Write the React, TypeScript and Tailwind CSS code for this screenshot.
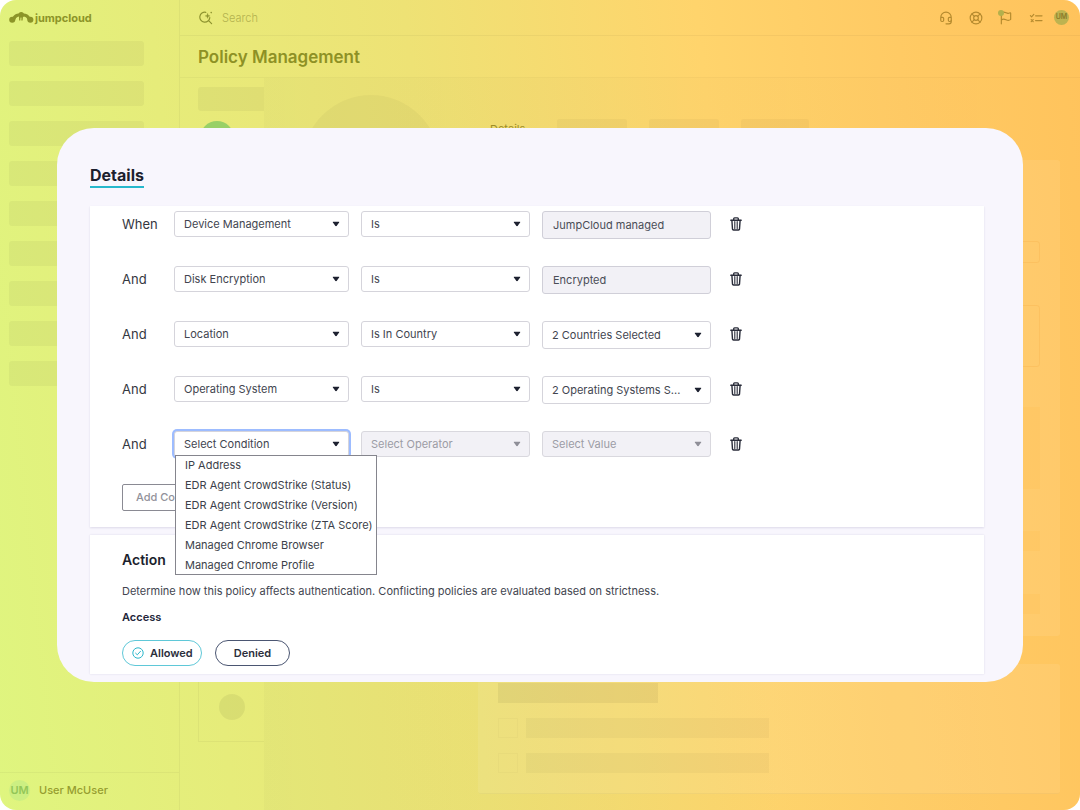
import React from "react";
import { Headset, LifeBuoy, Flag } from "lucide-react";

type Operator = { text: string; disabled?: boolean };
type Value = { kind: "input" | "select"; text: string; disabled?: boolean };
type Condition = {
  join: string;
  subject: string;
  operator: Operator;
  value: Value;
  open?: boolean;
};

const conditions: Condition[] = [
  { join: "When", subject: "Device Management", operator: { text: "Is" }, value: { kind: "input", text: "JumpCloud managed" } },
  { join: "And", subject: "Disk Encryption", operator: { text: "Is" }, value: { kind: "input", text: "Encrypted" } },
  { join: "And", subject: "Location", operator: { text: "Is In Country" }, value: { kind: "select", text: "2 Countries Selected" } },
  { join: "And", subject: "Operating System", operator: { text: "Is" }, value: { kind: "select", text: "2 Operating Systems S..." } },
  {
    join: "And",
    subject: "Select Condition",
    operator: { text: "Select Operator", disabled: true },
    value: { kind: "select", text: "Select Value", disabled: true },
    open: true,
  },
];

const menuItems = [
  "IP Address",
  "EDR Agent CrowdStrike (Status)",
  "EDR Agent CrowdStrike (Version)",
  "EDR Agent CrowdStrike (ZTA Score)",
  "Managed Chrome Browser",
  "Managed Chrome Profile",
];

function Logo() {
  return (
    <svg viewBox="0 0 26 14" className="h-[14px] w-[26px]" fill="currentColor" aria-hidden="true">
      <circle cx="3.200" cy="8.800" r="3" />
      <circle cx="21.400" cy="8.800" r="3" />
      <circle cx="12.200" cy="3.600" r="2.700" />
      <path d="M3 7C5 3.600 7.600 2.400 10.400 2.600H14C17 2.400 19.800 3.800 21.600 7L19 10.400C18.600 7.600 17.200 6 14.800 5.600L13.900 6.200L13.600 9.600H12.300L12.500 6.600H11.500L11.300 9.600H10.100L10 5.600C7.600 6 6.400 7.600 5.800 10.400Z" />
    </svg>
  );
}

function SearchIcon() {
  return (
    <svg viewBox="0 0 14 14" className="h-[14px] w-[14px]" fill="none" stroke="currentColor" strokeWidth="1.200" strokeLinecap="round" aria-hidden="true">
      <path d="M6.800 1.300A5 5 0 1 0 10.800 6.600M9.600 9.600L12.600 12.600" />
      <path d="M8.600 2.400L9.300 4.200L11.100 4.900L9.300 5.600L8.600 7.400L7.900 5.600L6.100 4.900L7.900 4.200Z" fill="currentColor" strokeWidth=".3" />
      <circle cx="12.200" cy="1.600" r=".8" fill="currentColor" stroke="none" />
    </svg>
  );
}

function TasksIcon() {
  return (
    <svg viewBox="0 0 14 14" className="h-[14px] w-[14px]" fill="none" stroke="currentColor" strokeWidth="1.200" strokeLinecap="round" strokeLinejoin="round" aria-hidden="true">
      <path d="M1.400 4.600L2.600 5.800L4.800 3.400M6.600 4.800H13M6.600 9.600H13" />
      <path d="M2.200 8.600L4.200 10.600M4.200 8.600L2.200 10.600" />
    </svg>
  );
}

function TrashIcon() {
  return (
    <svg viewBox="0 0 12 14" className="h-[14px] w-[12px]" fill="none" stroke="currentColor" strokeWidth="1.400" strokeLinecap="round" strokeLinejoin="round" aria-hidden="true">
      <path d="M.8 3.200H11.200M3.700 3V1.700Q3.700.9 4.500.9H7.500Q8.300.9 8.300 1.700V3" />
      <path d="M1.900 3.400L2.500 12.200Q2.600 13 3.400 13H8.600Q9.400 13 9.500 12.200L10.100 3.400" />
      <path d="M4.800 4.600V11.600M7.200 4.600V11.600" strokeWidth="1.100" />
    </svg>
  );
}

function Caret() {
  return (
    <svg viewBox="0 0 8 5" className="pointer-events-none absolute top-1/2 right-[9px] h-[5px] w-[8px] -translate-y-1/2" fill="currentColor" aria-hidden="true">
      <path d="M1.300 0H6.700Q7.600.2 7.100 1L4.600 4.400Q4 5 3.400 4.400L.9 1Q.4.2 1.300 0Z" />
    </svg>
  );
}

function SelectBox({ label, text, disabled, focused, tall }: { label: string; text: string; disabled?: boolean; focused?: boolean; tall?: boolean }) {
  return (
    <div className={disabled ? "relative text-[#8f8f98]" : "relative text-[#1d2130]"}>
      <select
        aria-label={label}
        disabled={disabled}
        className={[
          "block w-full appearance-none rounded-[3px] border pr-6 pl-[9px] text-[11px] opacity-100 outline-none",
          tall ? "h-[28px]" : "h-[26px]",
          disabled ? "border-[#d9d8de] bg-[#f2f1f6] text-[#9c9ca5]" : "border-[#d5d4db] bg-white text-[#42454f]",
          focused ? "border-[#c9d8fb] ring-2 ring-[#9dbcff]" : "",
        ].join(" ")}
      >
        <option>{text}</option>
      </select>
      <Caret />
    </div>
  );
}

function ConditionMenu() {
  return (
    <ul role="listbox" aria-label="Conditions" className="absolute top-[24px] left-px z-10 bg-white pr-[4px] pl-[10px] text-[11px] whitespace-nowrap text-[#3c3f4a] inset-ring inset-ring-[#85858d]">
      {menuItems.map((item) => (
        <li key={item} role="option" aria-selected={false} className="leading-[20px]">
          {item}
        </li>
      ))}
    </ul>
  );
}

function ConditionRow({ condition }: { condition: Condition }) {
  const { join, subject, operator, value, open } = condition;
  return (
    <div className="grid h-7 grid-cols-[40px_175px_169px_169px_auto] items-start gap-x-3">
      <span className="text-[13px] leading-[26px] text-[#343741]">{join}</span>
      <div className="relative">
        <SelectBox label="Condition" text={subject} focused={open} />
        {open && <ConditionMenu />}
      </div>
      <SelectBox label="Operator" text={operator.text} disabled={operator.disabled} />
      {value.kind === "input" ? (
        <input
          aria-label="Value"
          readOnly
          value={value.text}
          className="h-[28px] w-full rounded-[3px] border border-[#d0cfd8] bg-[#f2f1f6] px-[10px] text-[11px] text-[#4a4d57] outline-none"
        />
      ) : (
        <SelectBox label="Value" text={value.text} disabled={value.disabled} tall={!value.disabled} />
      )}
      <button type="button" aria-label="Delete condition" className="ml-[7px] flex h-[26px] w-3 items-center justify-center text-[#2a2d3a]">
        <TrashIcon />
      </button>
    </div>
  );
}

function DetailsPanel() {
  return (
    <section className="w-full rounded-[37px] bg-[#f8f6fd] pt-[37px] pr-[39px] pb-2 pl-[33px]">
      <h2 className="w-fit border-b-2 border-[#27b8cc] pb-px text-[16px] leading-[20px] font-bold text-[#1c1f2e]">Details</h2>
      <div className="mt-[18px] bg-white px-8 pt-[5px] pb-4 shadow-[0_1px_2px_rgba(60,50,110,0.14)]">
        <div className="flex flex-col gap-[27px]">
          {conditions.map((condition) => (
            <ConditionRow key={condition.subject} condition={condition} />
          ))}
        </div>
        <button type="button" className="mt-[25px] h-[27px] rounded-[2px] border border-[#8a8a93] px-[13px] text-[11px] font-medium text-[#92929a]">
          Add Condition
        </button>
      </div>
      <div className="mt-2 bg-white px-8 pt-[15px] pb-2 shadow-[0_0_2px_rgba(60,50,110,0.14)]">
        <h3 className="text-[14px] leading-[20px] font-semibold text-[#1c1f2e]">Action</h3>
        <p className="mt-3 text-[11px] leading-[18px] text-[#42454f]">
          Determine how this policy affects authentication. Conflicting policies are evaluated based on strictness.
        </p>
        <h4 className="mt-2 text-[11px] leading-[18px] font-semibold text-[#23263a]">Access</h4>
        <div className="mt-[14px] flex gap-[13px]">
          <button type="button" className="flex h-[26px] items-center gap-[6px] rounded-full border border-[#5fc8d8] pr-2 pl-[9px] text-[11px] font-semibold text-[#2c2f3c]">
            <svg viewBox="0 0 12 12" className="h-3 w-3" fill="none" stroke="#2db7cb" aria-hidden="true">
              <circle cx="6" cy="6" r="5.200" />
              <path d="M3.600 6.200L5.300 7.800L8.500 4.300" strokeLinecap="round" strokeLinejoin="round" />
            </svg>
            Allowed
          </button>
          <button type="button" className="h-[26px] rounded-full border border-[#4b5672] px-[18px] text-[11px] font-semibold text-[#2c2f3c]">
            Denied
          </button>
        </div>
      </div>
    </section>
  );
}

function Sidebar() {
  return (
    <aside className="flex w-[180px] shrink-0 flex-col border-r border-black/4">
      <div className="flex h-9 items-center pl-[9px] text-[#8c9428]">
        <Logo />
        <span className="text-[11px] font-bold">jumpcloud</span>
      </div>
      <div className="mt-[5px] flex flex-1 flex-col gap-[15px] pr-[35px] pl-[9px]">
        {[0, 1, 2, 3, 4, 5, 6, 7, 8].map((n) => (
          <div key={n} className="h-[25px] rounded-[3px] bg-black/4" />
        ))}
      </div>
      <div className="flex h-[38px] items-center gap-[9px] border-t border-black/4 pb-0.5 pl-[9px] text-[11px]">
        <span className="flex h-[21px] w-[21px] items-center justify-center rounded-full bg-[#ccef82] font-semibold text-[#93c658]">UM</span>
        <span className="font-medium text-[#969d30]">User McUser</span>
      </div>
    </aside>
  );
}

function Header() {
  return (
    <header className="flex h-9 items-center border-b border-black/4 pr-[11px] pl-[19px]">
      <label className="flex items-center gap-[9px] text-[#8f9430]">
        <SearchIcon />
        <input type="search" placeholder="Search" aria-label="Search" className="w-40 bg-transparent pt-0.5 text-[11px] font-light outline-none placeholder:text-[#b3b24f]" />
      </label>
      <div className="ml-auto flex items-center gap-4 text-[#b58a2e]">
        <button type="button" aria-label="Support"><Headset size={14} strokeWidth={2} /></button>
        <button type="button" aria-label="Help"><LifeBuoy size={14} strokeWidth={2} /></button>
        <button type="button" aria-label="Updates" className="relative">
          <Flag size={14} strokeWidth={2} />
          <span className="absolute -top-px -left-px h-[6px] w-[6px] rounded-full bg-[#b4b04c]" />
        </button>
        <button type="button" aria-label="Tasks"><TasksIcon /></button>
        <span className="-ml-[5px] flex h-[15px] w-[15px] items-center justify-center rounded-full bg-[#bdb350] text-[7px] font-semibold text-[#8b7a2a]">UM</span>
      </div>
    </header>
  );
}

function PageBody() {
  return (
    <div className="flex flex-1 pl-[18px]">
      <div className="flex w-[66px] flex-col pb-[68px]">
        <div className="mt-[9px] h-6 rounded-l-[3px] bg-black/4" />
        <div className="mt-[10px] ml-[2px] h-[34px] w-[34px] rounded-full bg-[#98d066]" />
        <div className="flex flex-1 flex-col items-center justify-end border-b border-l border-black/4 pb-[21px]">
          <div className="h-[26px] w-[26px] rounded-full bg-black/6" />
        </div>
      </div>
      <div className="flex flex-1 gap-[38px] bg-linear-to-r from-black/2 to-transparent pr-5 pl-[38px]">
        <div className="mt-[17px] h-[138px] w-[138px] shrink-0 rounded-full bg-black/3" />
        <div className="flex flex-1 flex-col pt-[41px] pb-4">
          <div className="flex h-6 gap-[22px] pl-3">
            <span className="mr-[10px] text-[11px] leading-[20px] text-[#9d8d28]">Details</span>
            <div className="w-[70px] rounded-[2px] bg-black/3" />
            <div className="w-[70px] rounded-[2px] bg-black/3" />
            <div className="w-[68px] rounded-[2px] bg-black/3" />
          </div>
          <div className="mt-[17px] flex flex-1 flex-col rounded-[3px] bg-white/8 px-5 pt-[81px]">
            <div className="h-[22px] rounded-[3px] border border-[#f7b551]/40" />
            <div className="mt-[42px] h-[62px] rounded-[3px] border border-[#f7b551]/40" />
            <div className="mt-10 h-[82px] bg-[#ffc25c]/40" />
            <div className="mt-[42px] h-5 bg-[#ffc25c]/40" />
            <div className="mt-[43px] h-5 bg-[#ffc25c]/40" />
          </div>
          <div className="mt-7 flex h-[130px] flex-col rounded-[3px] border-b border-black/3 bg-white/8 px-5 pt-[19px]">
            <div className="h-5 w-[160px] bg-black/5" />
            <div className="mt-[15px] flex h-5 gap-2">
              <div className="w-5 border border-black/2" />
              <div className="w-[243px] bg-black/3" />
            </div>
            <div className="mt-[15px] flex h-5 gap-2">
              <div className="w-5 border border-black/2" />
              <div className="w-[243px] bg-black/3" />
            </div>
          </div>
        </div>
      </div>
    </div>
  );
}

export default function App() {
  return (
    <div className="bg-white font-['Inter',sans-serif]">
      <div className="relative flex min-h-screen overflow-hidden rounded-[16px] bg-[linear-gradient(84deg,#dff57f_0%,#e6ec7a_20%,#eee275_42%,#ffd46c_67%,#ffca64_84%,#ffc35c_100%)]">
        <Sidebar />
        <main className="flex flex-1 flex-col">
          <Header />
          <h1 className="flex h-[42px] items-center border-b border-black/3 pt-0.5 pl-[18px] text-[17px] font-semibold text-[#8e9125]">Policy Management</h1>
          <PageBody />
        </main>
        <div className="absolute inset-0 flex items-center px-[57px]">
          <DetailsPanel />
        </div>
      </div>
    </div>
  );
}
